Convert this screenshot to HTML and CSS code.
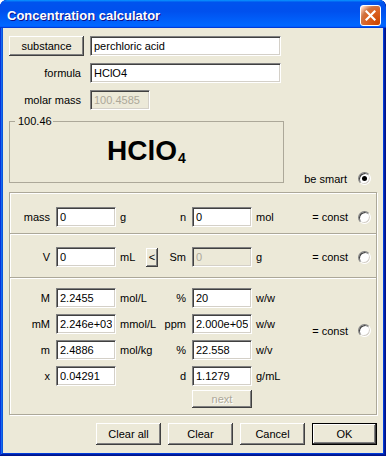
FILE: index.html
```html
<!DOCTYPE html>
<html lang="en">
<head>
  <meta charset="UTF-8" />
  <title>Concentration calculator</title>
  <link rel="stylesheet" href="styles.css">
</head>
<body>

  <div class="window">
    <div class="titlebar">
      <span class="title">Concentration calculator</span>
      <button class="close" aria-label="Close">
        <svg width="11" height="11" viewBox="0 0 11 11"><path d="M1.5 1.5l8 8M9.5 1.5l-8 8" stroke="#fff" stroke-width="2.2" stroke-linecap="square"/></svg>
      </button>
    </div>

    <div class="client">
      <div class="top-rows">
        <div class="row">
          <button class="btn btn-substance">substance</button>
          <input class="field field-wide" value="perchloric acid">
        </div>
        <div class="row">
          <span class="row-label">formula</span>
          <input class="field field-wide" value="HClO4">
        </div>
        <div class="row">
          <span class="row-label">molar mass</span>
          <input class="field" value="100.4585" disabled>
        </div>
      </div>

      <div class="formula-row">
        <fieldset class="formula-box">
          <legend>100.46</legend>
          <div class="formula">HClO<sub>4</sub></div>
        </fieldset>
        <div class="smart">
          <span>be smart</span>
          <span class="radio checked"></span>
        </div>
      </div>

      <div class="calc-group">
        <!-- amount -->
        <div class="section sec-amount">
          <div class="fields">
            <span class="lbl">mass</span>
            <input class="field" value="0">
            <span class="unit">g</span>
            <span class="lbl">n</span>
            <input class="field" value="0">
            <span class="unit">mol</span>
          </div>
          <div class="const"><span>= const</span><span class="radio"></span></div>
        </div>

        <!-- volume -->
        <div class="section sec-volume">
          <div class="fields">
            <span class="lbl">V</span>
            <input class="field" value="0">
            <span class="unit">mL</span>
            <span class="lbl lbl-btn"><button class="btn btn-small">&lt;</button><span>Sm</span></span>
            <input class="field" value="0" disabled>
            <span class="unit">g</span>
          </div>
          <div class="const"><span>= const</span><span class="radio"></span></div>
        </div>

        <!-- concentration -->
        <div class="section sec-conc">
          <div class="fields">
            <span class="lbl">M</span>
            <input class="field" value="2.2455">
            <span class="unit">mol/L</span>
            <span class="lbl">%</span>
            <input class="field" value="20">
            <span class="unit">w/w</span>

            <span class="lbl">mM</span>
            <input class="field" value="2.246e+03">
            <span class="unit">mmol/L</span>
            <span class="lbl">ppm</span>
            <input class="field" value="2.000e+05">
            <span class="unit">w/w</span>

            <span class="lbl">m</span>
            <input class="field" value="2.4886">
            <span class="unit">mol/kg</span>
            <span class="lbl">%</span>
            <input class="field" value="22.558">
            <span class="unit">w/v</span>

            <span class="lbl">x</span>
            <input class="field" value="0.04291">
            <span class="unit"></span>
            <span class="lbl">d</span>
            <input class="field" value="1.1279">
            <span class="unit">g/mL</span>

            <button class="btn btn-next" disabled>next</button>
          </div>
          <div class="const"><span>= const</span><span class="radio"></span></div>
        </div>
      </div>

      <div class="actions">
        <button class="btn">Clear all</button>
        <button class="btn">Clear</button>
        <button class="btn">Cancel</button>
        <button class="btn btn-default">OK</button>
      </div>
    </div>
  </div>

</body>
</html>
```

FILE: styles.css
```css
* {
  margin: 0;
  padding: 0;
  box-sizing: border-box;
}

body {
  background: #fff;
  font-family: 'Liberation Sans', Arial, sans-serif;
  font-size: 11px;
  color: #000;
}

.window {
  width: 386px;
  height: 456px;
  display: flex;
  flex-direction: column;
  background: #0055e5;
  border-radius: 7px 7px 0 0;
  overflow: hidden;
  box-shadow: inset -1px -1px #00138c, inset 1px 1px #0831d9,
              inset -2px -2px #001ea0, inset 2px 2px #166aee,
              inset -3px -3px #003bda, inset 3px 3px #0855dd;
}

/* title bar */
.titlebar {
  height: 29px;
  display: flex;
  align-items: center;
  justify-content: space-between;
  padding: 0 5px 0 7px;
  background: linear-gradient(180deg, #0997ff, #0053ee 8%, #0050ee 40%, #06f 88%, #06f 93%, #005bff 95%, #003dd7 96%, #003dd7);
  border-radius: 7px 7px 0 0;
}

.title {
  padding-top: 2px;
  font-size: 13px;
  font-weight: bold;
  color: #fff;
  text-shadow: 1px 1px #0f1089;
}

.close {
  width: 21px;
  height: 21px;
  margin-top: 2px;
  display: flex;
  align-items: center;
  justify-content: center;
  border: 1px solid #fff;
  border-radius: 3px;
  background: radial-gradient(circle at 90% 90%, #cc4600 0%, #dc6527 55%, #cd7546 70%, #ffccb2 90%, #fff 100%);
}

/* dialog body */
.client {
  flex: 1;
  margin: 0 3px 3px;
  padding: 8px 6px;
  background: #ece9d8;
}

.btn {
  font: inherit;
  color: #000;
  background: #ece9d8;
  border: none;
  box-shadow: inset -1px -1px #404040, inset 1px 1px #fff, inset -2px -2px #808080;
}

.btn:disabled {
  color: #aca899;
  text-shadow: 1px 1px #fff;
}

.field {
  width: 60px;
  height: 20px;
  padding: 0 3px;
  font: inherit;
  color: #000;
  background: #fff;
  border: 1px solid;
  border-color: #808080 #fff #fff #808080;
  box-shadow: inset 1px 1px #404040, inset -1px -1px #d4d0c8;
  outline: none;
}

.field:disabled {
  background: #ece9d8;
  color: #aca899;
}

.field-wide {
  width: 191px;
}

.radio {
  width: 13px;
  height: 13px;
  flex-shrink: 0;
  border-radius: 50%;
  background: #fff;
  border: 1px solid;
  border-color: #808080 #fff #fff #808080;
  box-shadow: inset 1px 1px #404040, inset -1px -1px #d4d0c8;
}

.radio.checked::after {
  content: '';
  display: block;
  width: 5px;
  height: 5px;
  margin: 3px;
  border-radius: 50%;
  background: #000;
}

/* substance / formula rows */
.top-rows {
  display: flex;
  flex-direction: column;
  gap: 7px;
}

.row {
  height: 20px;
  display: flex;
  align-items: center;
  gap: 6px;
}

.btn-substance {
  width: 75px;
  height: 20px;
}

.row-label {
  width: 75px;
  padding-right: 3px;
  text-align: right;
}

/* formula box */
.formula-row {
  display: flex;
  align-items: flex-end;
  margin-top: 5px;
}

.formula-box {
  width: 275px;
  height: 68px;
  min-width: 0;
  padding: 0;
  border: 1px solid #aca899;
}

.formula-box legend {
  margin-left: 5px;
  padding: 0 1px 0 3px;
  line-height: 13px;
}

.formula {
  padding-top: 7px;
  text-align: center;
  font-size: 28px;
  font-weight: bold;
  line-height: 32px;
}

.formula sub {
  margin-left: 1px;
  font-size: 14px;
  line-height: 0;
  vertical-align: -3px;
}

.smart {
  display: flex;
  align-items: center;
  gap: 11px;
  margin: 0 6px -2px auto;
}

/* calculation group */
.calc-group {
  margin-top: 9px;
  border: 1px solid #aca899;
  box-shadow: inset 1px 1px #fff, 1px 1px #fff;
}

.section {
  display: flex;
  align-items: center;
  padding-right: 5px;
}

.section + .section {
  border-top: 1px solid #aca899;
  box-shadow: inset 0 1px #fff;
}

.sec-amount {
  padding-top: 14px;
  padding-bottom: 6px;
}

.sec-volume {
  padding-top: 13px;
  padding-bottom: 10px;
}

.sec-conc {
  align-items: flex-start;
  padding-top: 10px;
  padding-bottom: 2px;
}

.sec-conc .const {
  margin-top: 36px;
}

.fields {
  display: grid;
  grid-template-columns: 46px 60px 30px 46px 60px 40px;
  grid-auto-rows: 20px;
  row-gap: 6px;
  align-items: center;
}

.lbl {
  padding-right: 6px;
  text-align: right;
}

.lbl-btn {
  display: flex;
  align-items: center;
  justify-content: space-between;
}

.unit {
  padding-left: 4px;
  white-space: nowrap;
}

.btn-small {
  width: 12px;
  height: 19px;
}

.btn-next {
  grid-column: 5;
  align-self: start;
  width: 60px;
  height: 18px;
  margin-top: -2px;
}

.const {
  margin-left: auto;
  display: flex;
  align-items: center;
  gap: 10px;
}

/* dialog buttons */
.actions {
  display: flex;
  justify-content: flex-end;
  gap: 7px;
  margin-top: 8px;
}

.actions .btn {
  width: 65px;
  height: 22px;
}

.btn-default {
  box-shadow: inset 0 0 0 1px #000, inset -2px -2px #404040, inset 2px 2px #fff, inset -3px -3px #808080;
}
```
